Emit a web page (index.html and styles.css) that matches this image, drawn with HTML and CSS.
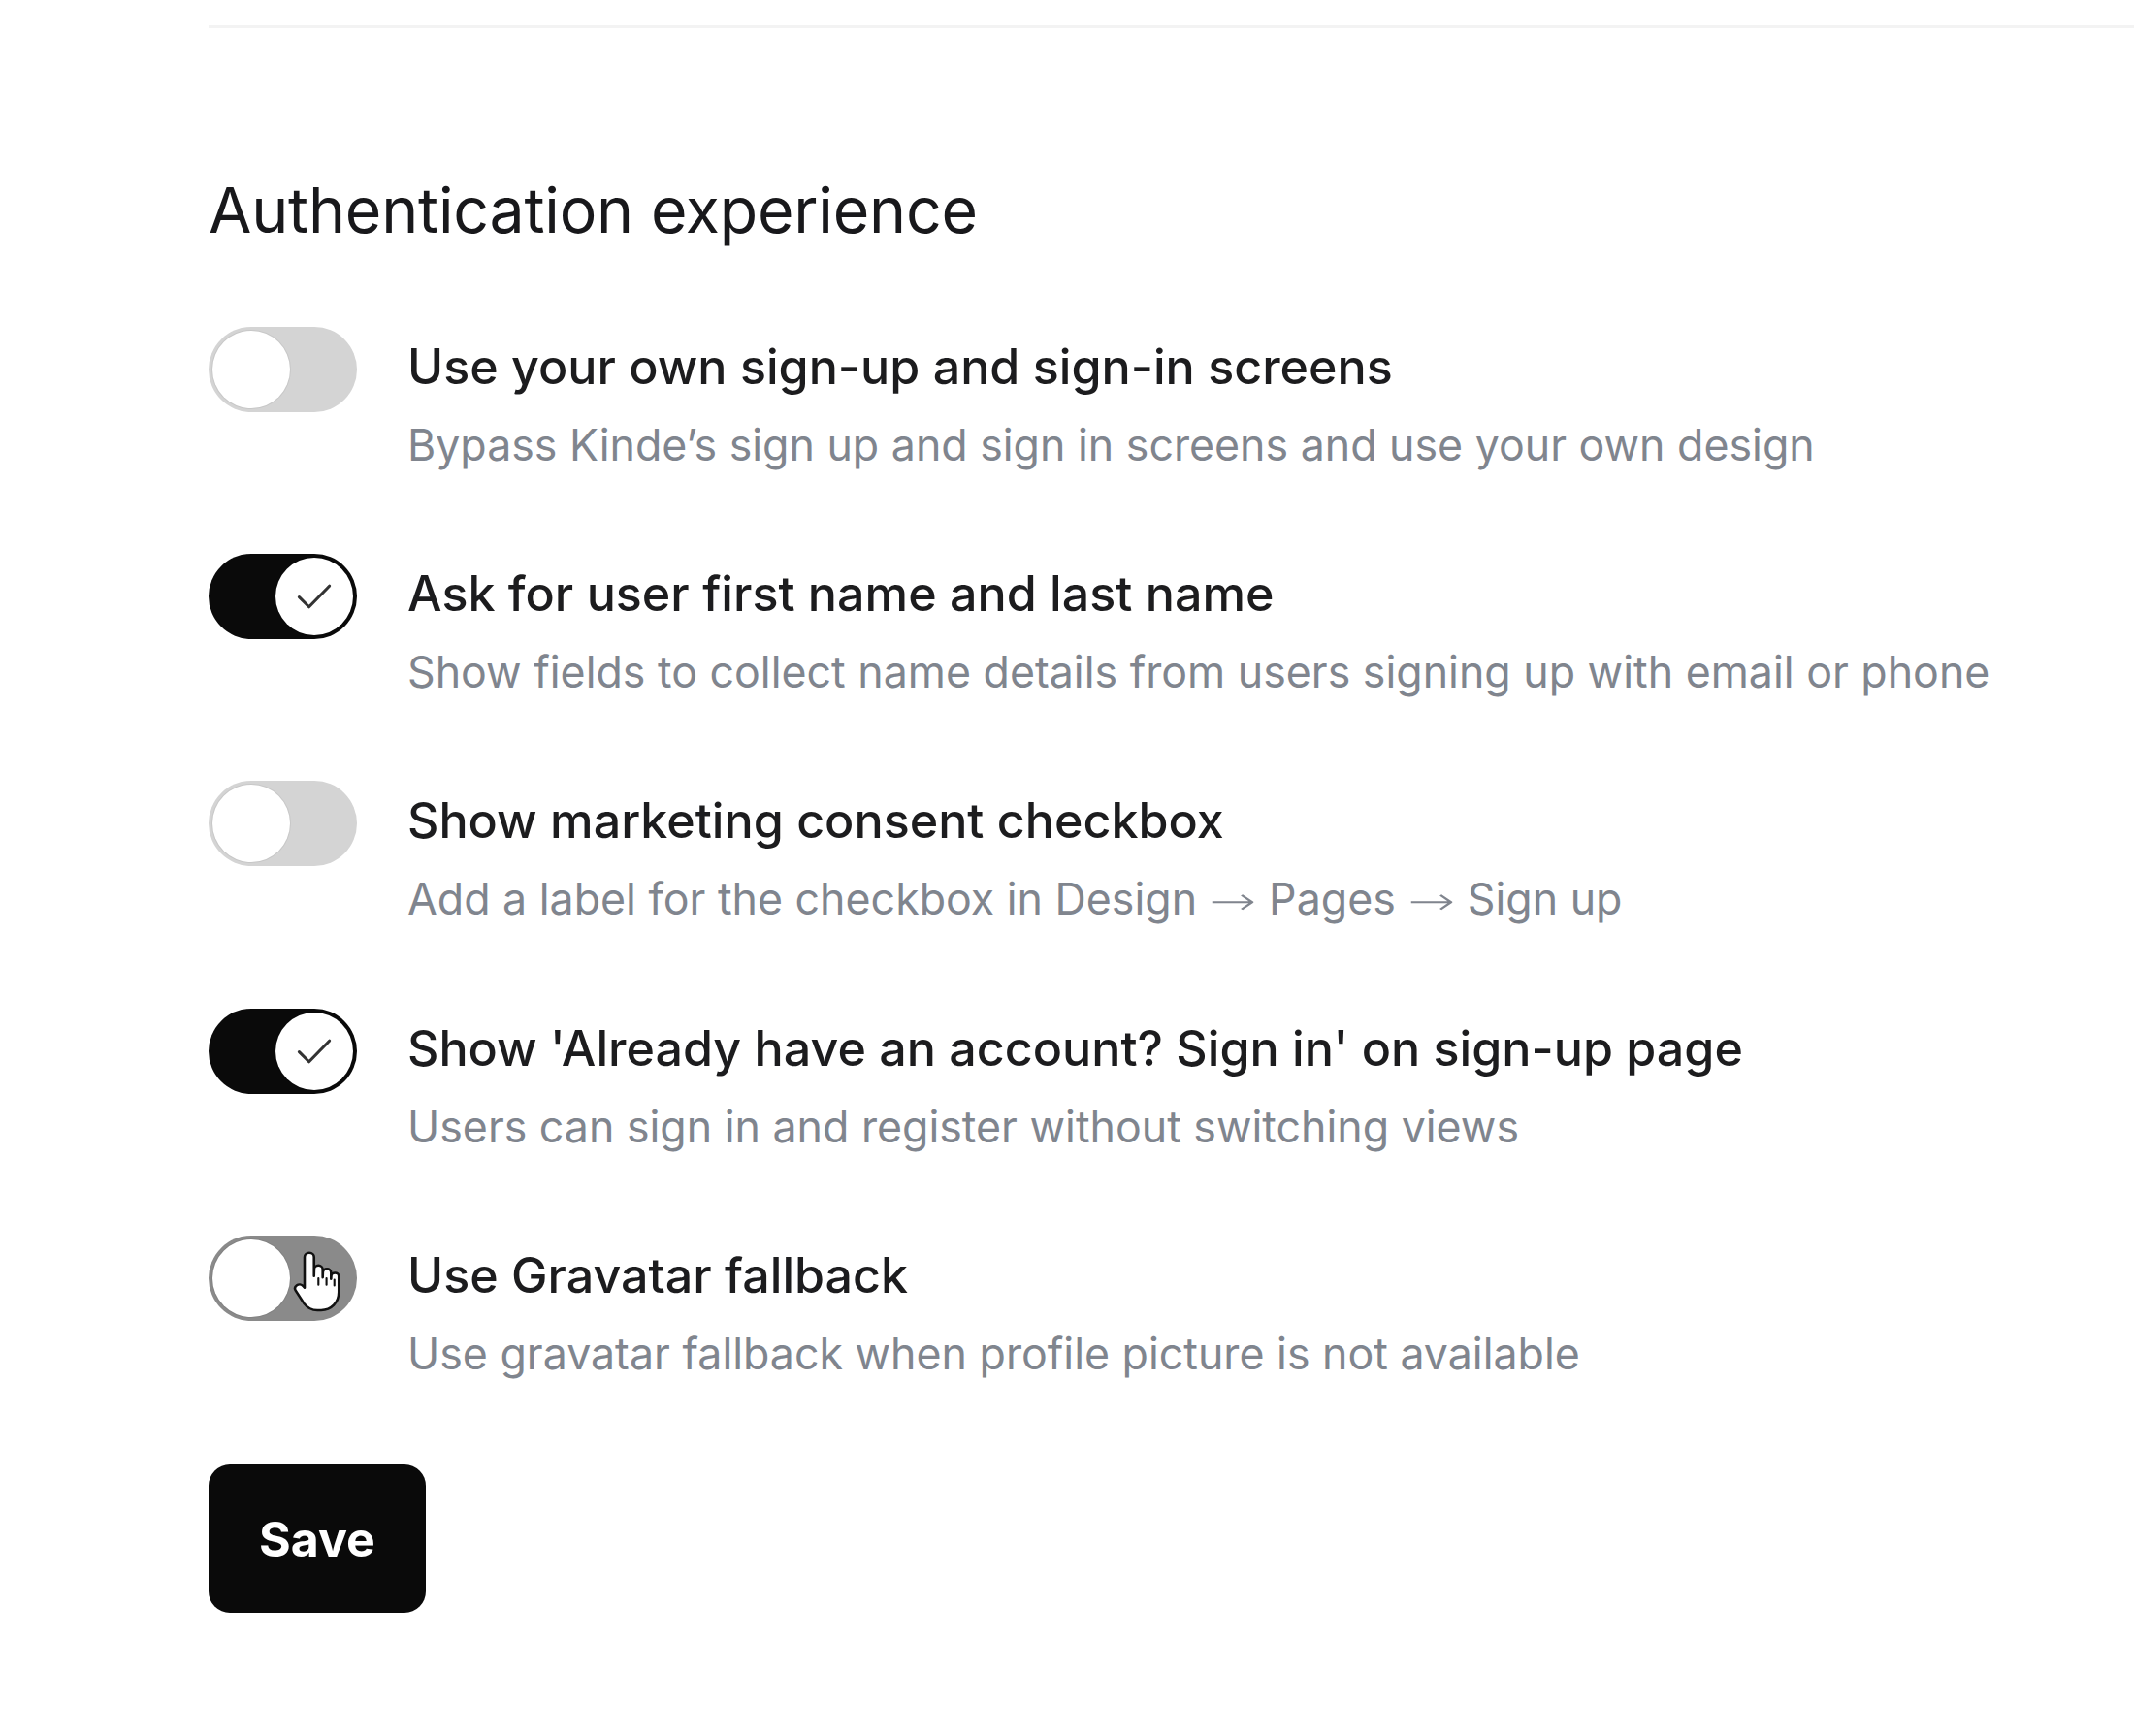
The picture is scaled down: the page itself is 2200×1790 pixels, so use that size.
FILE: index.html
```html
<!DOCTYPE html>
<html lang="en">
<head>
<meta charset="utf-8">
<title>Authentication experience</title>
<link rel="stylesheet" href="styles.css">
</head>
<body>
<div class="page">
  <hr class="divider">
  <section class="section">
    <h2 class="heading">Authentication experience</h2>
    <ul class="options">
      <li class="option">
        <span class="toggle"><span class="knob"></span></span>
        <div class="text">
          <div class="title">Use your own sign-up and sign-in screens</div>
          <div class="desc">Bypass Kinde’s sign up and sign in screens and use your own design</div>
        </div>
      </li>
      <li class="option">
        <span class="toggle on"><span class="knob"><svg class="check" viewBox="0 0 24 24"><path d="M6.5 12.2l3.6 3.6 7.4-7.6"/></svg></span></span>
        <div class="text">
          <div class="title">Ask for user first name and last name</div>
          <div class="desc">Show fields to collect name details from users signing up with email or phone</div>
        </div>
      </li>
      <li class="option">
        <span class="toggle"><span class="knob"></span></span>
        <div class="text">
          <div class="title">Show marketing consent checkbox</div>
          <div class="desc">Add a label for the checkbox in Design<span class="arrow">→</span>Pages<span class="arrow">→</span>Sign up</div>
        </div>
      </li>
      <li class="option">
        <span class="toggle on"><span class="knob"><svg class="check" viewBox="0 0 24 24"><path d="M6.5 12.2l3.6 3.6 7.4-7.6"/></svg></span></span>
        <div class="text">
          <div class="title">Show 'Already have an account? Sign in' on sign-up page</div>
          <div class="desc">Users can sign in and register without switching views</div>
        </div>
      </li>
      <li class="option">
        <span class="toggle hover"><span class="knob"></span>
          <svg class="cursor" viewBox="0 0 32 44" preserveAspectRatio="none"><path d="M11 2.5c1.7 0 3 1.3 3 3V18.5l.1-4.6c0-1.5 1.2-2.7 2.7-2.7s2.7 1.2 2.7 2.7v5.6l.1-3.4c0-1.5 1.2-2.6 2.6-2.6s2.6 1.1 2.6 2.6v4.4l.1-1.8c0-1.4 1.1-2.4 2.4-2.4s2.4 1 2.4 2.4v10.8c0 7.2-4.8 12.5-11.2 12.5h-2.4c-3.6 0-6.4-1.7-8.4-4.6L2.4 28.6c-.8-1.3-.5-2.9.7-3.8 1.2-.9 2.9-.7 3.9.5L8 26.5V5.5c0-1.7 1.3-3 3-3z"/><path class="line" d="M16.8 20v4.5M21.9 20v4.5M26.9 21v4"/></svg>
        </span>
        <div class="text">
          <div class="title">Use Gravatar fallback</div>
          <div class="desc">Use gravatar fallback when profile picture is not available</div>
        </div>
      </li>
    </ul>
    <button class="save" type="button">Save</button>
  </section>
</div>
</body>
</html>
```
FILE: styles.css
```css
html, body {
  margin: 0;
  padding: 0;
  background: #ffffff;
}
body {
  font-family: Inter, "Liberation Sans", Arial, sans-serif;
  color: #1c1c1e;
}
.page {
  padding: 26px 0 0 215px;
}
.divider {
  margin: 0;
  border: 0;
  border-top: 3px solid #f3f3f3;
}
.section {
  padding-top: 150px;
}
.heading {
  margin: 0 0 93px;
  font-size: 64.4px;
  font-weight: 400;
  line-height: 76px;
  color: #18181b;
  letter-spacing: -0.2px;
}
.options {
  list-style: none;
  margin: 0;
  padding: 0;
  display: flex;
  flex-direction: column;
  gap: 94.8px;
}
.option {
  display: flex;
  align-items: flex-start;
  gap: 52px;
}
.toggle {
  position: relative;
  flex: none;
  width: 153px;
  height: 88px;
  box-sizing: border-box;
  border-radius: 44px;
  background: #d4d4d4;
  padding: 4px;
  display: flex;
  align-items: center;
  justify-content: flex-start;
  margin-top: -11px;
}
.knob {
  width: 80px;
  height: 80px;
  border-radius: 50%;
  background: #ffffff;
  box-sizing: border-box;
  box-shadow: 0 0 0 1px rgba(0,0,0,0.06);
  display: flex;
  align-items: center;
  justify-content: center;
}
.toggle.on {
  background: #0a0a0a;
  justify-content: flex-end;
}
.toggle.hover {
  background: #8a8a8a;
}
.check {
  width: 68px;
  height: 68px;
  fill: none;
  stroke: #333333;
  stroke-width: 1.1;
  stroke-linecap: round;
  stroke-linejoin: round;
}
.cursor {
  position: absolute;
  left: 86px;
  top: 14px;
  width: 52px;
  height: 66px;
  fill: #ffffff;
  stroke: #111111;
  stroke-width: 1.6;
  stroke-linejoin: round;
}
.cursor .line {
  fill: none;
  stroke-width: 1.3;
  stroke-linecap: round;
}
.text {
  display: flex;
  flex-direction: column;
  gap: 23px;
}
.title {
  font-size: 50.2px;
  font-weight: 500;
  line-height: 60px;
  color: #1c1c1e;
}
.desc {
  font-size: 44.7px;
  font-weight: 400;
  line-height: 56px;
  color: #80858e;
}
.arrow {
  display: inline-block;
  width: 52px;
  margin: 0 11px;
  text-align: center;
  font-family: "DejaVu Sans", sans-serif;
  font-size: 40px;
  font-weight: 300;
  transform: scaleX(1.45);
}
.save {
  margin-top: 86px;
  width: 224px;
  height: 153px;
  border: 0;
  border-radius: 22px;
  background: #0a0a0a;
  color: #ffffff;
  font-family: Inter, "Liberation Sans", Arial, sans-serif;
  font-size: 50px;
  font-weight: 700;
  padding: 0;
}
```
